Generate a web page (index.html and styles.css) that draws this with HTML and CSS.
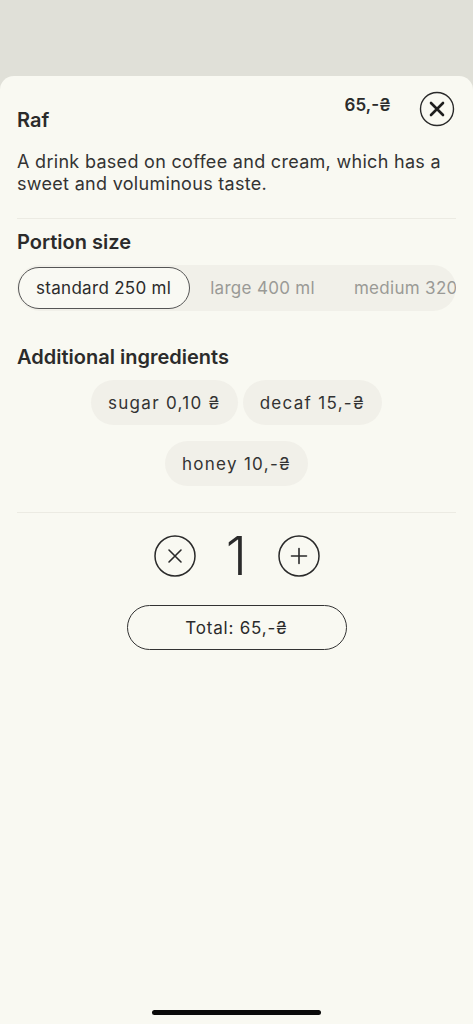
FILE: index.html
```html
<!DOCTYPE html>
<html lang="en">
<head>
    <meta charset="utf-8">
    <title>Raf</title>
    <meta name="viewport" content="width=device-width, initial-scale=1">
    <link rel="stylesheet" href="styles.css">
</head>
<body>
    <div class="backdrop"></div>
    <div class="sheet">
        <div class="sheet-header">
            <h1 class="title">Raf</h1>
            <div class="header-right">
                <span class="price">65,-₴</span>
                <button class="close-btn" aria-label="Close">
                    <svg width="36" height="36" viewBox="0 0 36 36">
                        <circle cx="18" cy="18" r="16.5" fill="none" stroke="#2a2a2a" stroke-width="1.4"/>
                        <path d="M12 12 L24 24 M24 12 L12 24" stroke="#1e1e1e" stroke-width="2.6" stroke-linecap="round"/>
                    </svg>
                </button>
            </div>
        </div>
        <p class="description">A drink based on coffee and cream, which has a sweet and voluminous taste.</p>

        <hr class="divider">

        <h2 class="section-title">Portion size</h2>
        <div class="segments">
            <button class="segment active">standard 250 ml</button>
            <button class="segment">large 400 ml</button>
            <button class="segment">medium 320 ml</button>
        </div>

        <h2 class="section-title extras-title">Additional ingredients</h2>
        <div class="chips">
            <button class="chip">sugar 0,10 ₴</button>
            <button class="chip">decaf 15,-₴</button>
            <button class="chip">honey 10,-₴</button>
        </div>

        <hr class="divider">

        <div class="counter">
            <button class="round-btn" aria-label="Remove">
                <svg width="42" height="42" viewBox="0 0 42 42">
                    <circle cx="21" cy="21" r="20" fill="none" stroke="#2a2a2a" stroke-width="1.5"/>
                    <path d="M15 15 L27 27 M27 15 L15 27" stroke="#2a2a2a" stroke-width="1.6" stroke-linecap="round"/>
                </svg>
            </button>
            <span class="count">1</span>
            <button class="round-btn" aria-label="Add">
                <svg width="42" height="42" viewBox="0 0 42 42">
                    <circle cx="21" cy="21" r="20" fill="none" stroke="#2a2a2a" stroke-width="1.5"/>
                    <path d="M21 13.5 V28.5 M13.5 21 H28.5" stroke="#2a2a2a" stroke-width="1.6" stroke-linecap="round"/>
                </svg>
            </button>
        </div>

        <div class="total-row">
            <button class="total-btn">Total: 65,-₴</button>
        </div>

        <div class="home-indicator"></div>
    </div>
</body>
</html>
```

FILE: styles.css
```css
body {
    margin: 0;
    padding: 0;
    background: #e0e0d8;
    font-family: Inter, "Noto Sans", sans-serif;
    color: #2b2b2b;
}

button {
    font-family: inherit;
    color: inherit;
    cursor: pointer;
}

.backdrop {
    height: 76px;
}

.sheet {
    background: #f9f9f2;
    border-radius: 14px 14px 0 0;
    min-height: 948px;
    padding: 0 17px;
    box-sizing: border-box;
    display: flex;
    flex-direction: column;
}

.sheet-header {
    display: flex;
    justify-content: space-between;
    align-items: flex-start;
    padding-top: 15px;
}

.title {
    margin: 17px 0 0;
    font-size: 20px;
    font-weight: 600;
    line-height: 24px;
}

.header-right {
    display: flex;
    align-items: flex-start;
    gap: 28px;
    margin-right: 1px;
}

.price {
    font-size: 17px;
    font-weight: 600;
    line-height: 20px;
    margin-top: 4px;
}

.close-btn {
    border: none;
    background: none;
    padding: 0;
    width: 36px;
    height: 36px;
}

.close-btn svg,
.round-btn svg {
    display: block;
}

.description {
    margin: 19px 0 0;
    font-size: 18px;
    line-height: 22px;
    letter-spacing: 0.3px;
    color: #333;
}

.divider {
    border: none;
    border-top: 1px solid #ecebe3;
    margin: 23px 0 0;
}

.section-title {
    margin: 11px 0 0;
    font-size: 20px;
    font-weight: 600;
    line-height: 24px;
}

.segments {
    margin-top: 11px;
    background: #f1f0e9;
    border-radius: 23px;
    height: 46px;
    display: flex;
    align-items: center;
    padding: 0 1px;
    overflow: hidden;
    white-space: nowrap;
}

.segment {
    flex: none;
    border: 1px solid transparent;
    background: none;
    height: 42px;
    padding: 0 18px 0 17px;
    border-radius: 21px;
    font-size: 17px;
    letter-spacing: 0.3px;
    color: #9a9a96;
    margin-right: 2px;
}

.segment.active {
    border-color: #555;
    background: #f9f9f3;
    color: #2b2b2b;
}

.extras-title {
    margin-top: 34px;
}

.chips {
    margin-top: 11px;
    display: flex;
    flex-wrap: wrap;
    justify-content: center;
    gap: 16px 5px;
    padding: 0 70px;
}

.chip {
    border: none;
    background: #f1f0e9;
    height: 45px;
    padding: 0 17px;
    border-radius: 23px;
    font-size: 17px;
    letter-spacing: 1.3px;
    color: #333;
}

.chips + .divider {
    margin-top: 26px;
}

.counter {
    margin-top: 15px;
    display: flex;
    justify-content: center;
    align-items: center;
    gap: 15px;
}

.round-btn {
    border: none;
    background: none;
    padding: 0;
}

.count {
    font-size: 54px;
    font-weight: 300;
    line-height: 56px;
    width: 52px;
    text-align: center;
    color: #2b2b2b;
}

.total-row {
    margin-top: 21px;
    display: flex;
    justify-content: center;
}

.total-btn {
    width: 220px;
    height: 45px;
    border: 1px solid #333;
    border-radius: 23px;
    background: none;
    font-size: 17px;
    letter-spacing: 0.8px;
}

.home-indicator {
    margin: auto auto 9px;
    width: 169px;
    height: 5px;
    border-radius: 3px;
    background: #0a0a0a;
}
```
